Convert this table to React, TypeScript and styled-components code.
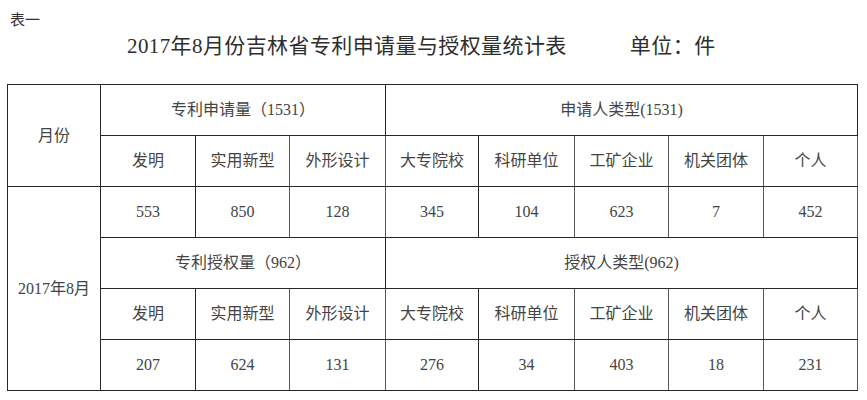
import React from 'react';
import styled, { createGlobalStyle } from 'styled-components';

const GlobalStyle = createGlobalStyle`
  html, body {
    margin: 0;
    padding: 0;
    background: #ffffff;
  }
  body {
    font-family: "Liberation Serif", "Noto Sans CJK SC", serif;
    color: #2a2a2a;
  }
`;

const Page = styled.div`
  width: 867px;
  height: 400px;
  overflow: hidden;
  background: #ffffff;
`;

const Note = styled.div`
  padding: 10px 0 0 10px;
  font-size: 15px;
  line-height: 20px;
  color: #333;
`;

const TitleRow = styled.div`
  display: flex;
  align-items: center;
  gap: 63px;
  margin-top: 2px;
  padding-left: 127px;
  font-size: 21px;
  line-height: 28px;
  color: #2e2e2e;
`;

const Title = styled.h1`
  margin: 0;
  font-size: inherit;
  font-weight: 400;
  letter-spacing: 0.4px;
`;

const Unit = styled.span`
  letter-spacing: 0.5px;
`;

const Table = styled.table`
  margin: 24px 0 0 7px;
  width: 850px;
  table-layout: fixed;
  border-collapse: collapse;
  border: 1.5px solid #1e1e1e;
  font-size: 16px;
  color: #444;
`;

const Row = styled.tr`
  height: 51px;
`;

const Cell = styled.td<{ $wide?: boolean }>`
  padding: 0;
  text-align: center;
  vertical-align: middle;
  border-top: 1px solid #262626;
  border-bottom: 1px solid #262626;
  border-left: 1px solid ${p => (p.$wide ? '#262626' : '#5a5a5a')};
  border-right: 1px solid ${p => (p.$wide ? '#262626' : '#5a5a5a')};
  line-height: 20px;
`;

const widths = [93, 95, 94, 96, 93, 96, 94, 95, 94];

const labels = ['发明', '实用新型', '外形设计', '大专院校', '科研单位', '工矿企业', '机关团体', '个人'];
const applied = ['553', '850', '128', '345', '104', '623', '7', '452'];
const granted = ['207', '624', '131', '276', '34', '403', '18', '231'];

const App: React.FC = () => {
  return (
    <Page>
      <GlobalStyle />
      <Note>表一</Note>
      <TitleRow>
        <Title>2017年8月份吉林省专利申请量与授权量统计表</Title>
        <Unit>单位：件</Unit>
      </TitleRow>
      <Table>
        <colgroup>
          {widths.map((w, i) => (
            <col key={i} style={{ width: w }} />
          ))}
        </colgroup>
        <tbody>
          <Row>
            <Cell $wide rowSpan={2}>月份</Cell>
            <Cell $wide colSpan={3}>专利申请量（1531）</Cell>
            <Cell $wide colSpan={5}>申请人类型(1531)</Cell>
          </Row>
          <Row>
            {labels.map((l, i) => (
              <Cell key={l} $wide={i === 0 || i === 3}>{l}</Cell>
            ))}
          </Row>
          <Row>
            <Cell $wide rowSpan={4}>2017年8月</Cell>
            {applied.map((v, i) => (
              <Cell key={i} $wide={i === 0 || i === 3}>{v}</Cell>
            ))}
          </Row>
          <Row>
            <Cell $wide colSpan={3}>专利授权量（962）</Cell>
            <Cell $wide colSpan={5}>授权人类型(962)</Cell>
          </Row>
          <Row>
            {labels.map((l, i) => (
              <Cell key={l} $wide={i === 0 || i === 3}>{l}</Cell>
            ))}
          </Row>
          <Row>
            {granted.map((v, i) => (
              <Cell key={i} $wide={i === 0 || i === 3}>{v}</Cell>
            ))}
          </Row>
        </tbody>
      </Table>
    </Page>
  );
};

export default App;
